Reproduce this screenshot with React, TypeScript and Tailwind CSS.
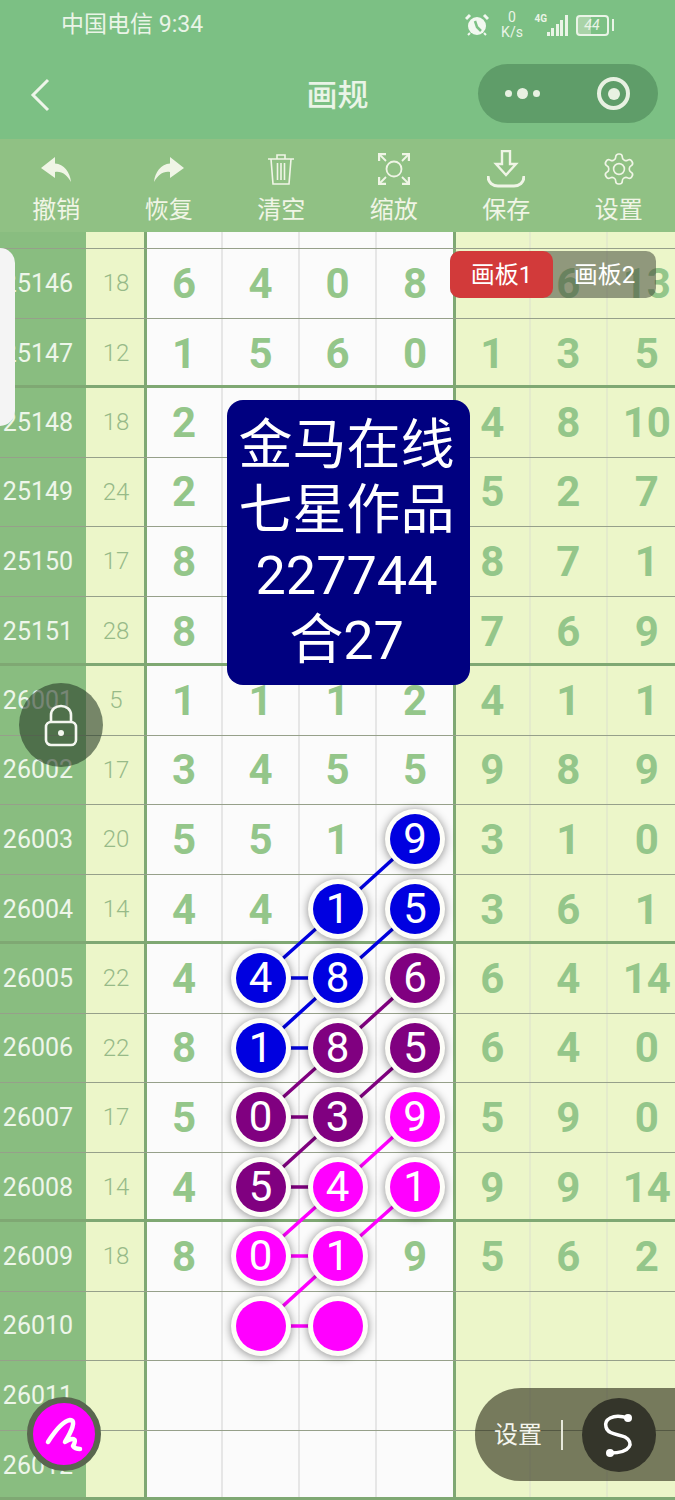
type Ball = { n: string; c: "blue" | "purple" | "pink" };
type Cell = string | Ball;

const b = (n: string): Ball => ({ n, c: "blue" });
const p = (n: string): Ball => ({ n, c: "purple" });
const m = (n: string): Ball => ({ n, c: "pink" });

const rows: { id: string; sum: string; cells: Cell[]; thick?: boolean }[] = [
  { id: "", sum: "", cells: ["", "", "", "", "", "", ""] },
  { id: "25146", sum: "18", cells: ["6", "4", "0", "8", "", "6", "13"] },
  { id: "25147", sum: "12", cells: ["1", "5", "6", "0", "1", "3", "5"], thick: true },
  { id: "25148", sum: "18", cells: ["2", "", "", "", "4", "8", "10"] },
  { id: "25149", sum: "24", cells: ["2", "", "", "", "5", "2", "7"] },
  { id: "25150", sum: "17", cells: ["8", "", "", "", "8", "7", "1"] },
  { id: "25151", sum: "28", cells: ["8", "", "", "", "7", "6", "9"], thick: true },
  { id: "26001", sum: "5", cells: ["1", "1", "1", "2", "4", "1", "1"] },
  { id: "26002", sum: "17", cells: ["3", "4", "5", "5", "9", "8", "9"] },
  { id: "26003", sum: "20", cells: ["5", "5", "1", b("9"), "3", "1", "0"] },
  { id: "26004", sum: "14", cells: ["4", "4", b("1"), b("5"), "3", "6", "1"], thick: true },
  { id: "26005", sum: "22", cells: ["4", b("4"), b("8"), p("6"), "6", "4", "14"] },
  { id: "26006", sum: "22", cells: ["8", b("1"), p("8"), p("5"), "6", "4", "0"] },
  { id: "26007", sum: "17", cells: ["5", p("0"), p("3"), m("9"), "5", "9", "0"] },
  { id: "26008", sum: "14", cells: ["4", p("5"), m("4"), m("1"), "9", "9", "14"], thick: true },
  { id: "26009", sum: "18", cells: ["8", m("0"), m("1"), "9", "5", "6", "2"] },
  { id: "26010", sum: "", cells: ["", m(""), m(""), "", "", "", ""] },
  { id: "26011", sum: "", cells: ["", "", "", "", "", "", ""] },
  { id: "26012", sum: "", cells: ["", "", "", "", "", "", ""], thick: true },
];

const links: [number, number, number, number, string][] = [
  [415, 839, 338, 909, "#0000e0"],
  [338, 909, 261, 978, "#0000e0"],
  [415, 909, 338, 978, "#0000e0"],
  [261, 978, 338, 978, "#0000e0"],
  [338, 978, 261, 1048, "#0000e0"],
  [261, 1048, 338, 1048, "#0000e0"],
  [415, 978, 338, 1048, "#800080"],
  [338, 1048, 261, 1117, "#800080"],
  [415, 1048, 338, 1117, "#800080"],
  [261, 1117, 338, 1117, "#800080"],
  [338, 1117, 261, 1187, "#800080"],
  [261, 1187, 338, 1187, "#800080"],
  [415, 1117, 338, 1187, "#ff00ff"],
  [338, 1187, 261, 1256, "#ff00ff"],
  [415, 1187, 338, 1256, "#ff00ff"],
  [261, 1256, 338, 1256, "#ff00ff"],
  [338, 1256, 261, 1326, "#ff00ff"],
  [261, 1326, 338, 1326, "#ff00ff"],
];

const ballColors = {
  blue: "bg-[#0000e0]",
  purple: "bg-[#800080]",
  pink: "bg-[#ff00ff]",
};

function BallView({ ball }: { ball: Ball }) {
  return (
    <div className="relative z-20 flex h-[60px] w-[60px] shrink-0 items-center justify-center rounded-full bg-[#fdfdf8] shadow-[0_1px_10px_rgba(0,0,0,0.45)]">
      <div
        className={`flex h-[50px] w-[50px] items-center justify-center rounded-full text-[42px] font-normal leading-none text-white ${ballColors[ball.c]}`}
      >
        {ball.n}
      </div>
    </div>
  );
}

function Row({ row, first }: { row: (typeof rows)[number]; first: boolean }) {
  const line = row.thick
    ? "border-b-[3px] border-[#7fa873]"
    : "border-b-[1.5px] border-[#96a08a]";
  const pad = row.thick ? "pt-[3px]" : "";
  return (
    <div
      className={`grid grid-cols-[86px_61px_76px_77px_77px_76px_77.5px_77.5px_77.5px] ${
        first ? "h-[17px]" : "h-[69.5px]"
      } ${line}`}
    >
      <div className={`flex items-center justify-center bg-[#89bd80] pr-[10px] text-[25px] text-[#eef6ea] ${pad}`}>
        {row.id}
      </div>
      <div className={`flex items-center justify-center border-r-[3px] border-[#7fa873] bg-[#ecf6c9] pl-[2px] text-[24px] font-light text-[#97ba88] ${pad}`}>
        {row.sum}
      </div>
      {row.cells.map((cell, i) => (
        <div
          key={i}
          className={`flex items-center justify-center text-[42px] font-bold text-[#94c68a] ${pad} ${
            i < 4 ? "bg-[#fbfbfb]" : "bg-[#ecf6c9]"
          } ${i === 3 ? "" : i === 6 ? "" : "border-r-2"} ${
            i < 3 ? "border-[#e6e6e6]" : "border-[#e4ebcb]"
          } ${i === 4 ? "border-l-[3px] border-l-[#7fa873]" : ""}`}
        >
          {typeof cell === "string" ? cell : <BallView ball={cell} />}
        </div>
      ))}
    </div>
  );
}

function ToolItem({ label, children }: { label: string; children: React.ReactNode }) {
  return (
    <div className="flex w-[112.5px] flex-col items-center">
      <div className="flex h-[50px] items-center justify-center">{children}</div>
      <div className="text-[24px] leading-[32px] text-[#f0f5e6]">{label}</div>
    </div>
  );
}

export default function App() {
  return (
    <div className="relative h-[1500px] w-[675px] overflow-hidden bg-[#ecf6c9] font-['Roboto','Noto_Sans_CJK_SC',sans-serif]">
      {/* status bar + title */}
      <div className="h-[139px] bg-[#7cc084] text-[#eaf4e7]">
        <div className="flex h-[50px] items-center justify-between pl-[61px] pr-[61px]">
          <div className="text-[23px]">中国电信 9:34</div>
          <div className="flex items-center">
            <svg width="24" height="24" viewBox="0 0 24 24" className="mr-[11px]">
              <circle cx="12" cy="13" r="9" fill="#f2f8f0" />
              <path d="M1 6 L5 2 M23 6 L19 2" stroke="#f2f8f0" strokeWidth="3" />
              <path d="M3 22 L5 20 M21 22 L19 20" stroke="#f2f8f0" strokeWidth="2" />
              <path d="M10 8 L12 14 L16 18" stroke="#7cc084" strokeWidth="2.5" fill="none" />
            </svg>
            <div className="mr-[10px] flex w-[25px] flex-col items-center text-[14px] leading-[15px]">
              <span>0</span>
              <span>K/s</span>
            </div>
            <div className="relative mr-[8px] flex h-[22px] w-[33px] items-end justify-end gap-[1.5px]">
              <span className="absolute left-0 top-0 text-[10px] font-bold leading-[10px]">4G</span>
              <i className="h-[4px] w-[3px] bg-[#eaf4e7]" />
              <i className="h-[8px] w-[3px] bg-[#eaf4e7]" />
              <i className="h-[12px] w-[3px] bg-[#eaf4e7]" />
              <i className="h-[16px] w-[3px] bg-[#eaf4e7]" />
              <i className="h-[21px] w-[3px] bg-[#eaf4e7]" />
            </div>
            <div className="flex h-[21px] w-[33px] items-center justify-center rounded-[4px] border-2 border-[#eaf4e7] bg-[linear-gradient(90deg,#a9d3a8_45%,transparent_45%)] text-[14px] italic leading-none">
              44
            </div>
            <div className="ml-[3px] h-[12px] w-[2.5px] bg-[#eaf4e7]" />
          </div>
        </div>
        <div className="grid h-[89px] grid-cols-3 items-start">
          <div className="pl-[30px] pt-[28px]">
            <svg width="20" height="34" viewBox="0 0 20 34" fill="none">
              <path d="M18 2 L3 17 L18 32" stroke="#eef5ea" strokeWidth="3" />
            </svg>
          </div>
          <div className="pt-[25px] text-center text-[31px] font-medium leading-[42px]">画规</div>
          <div className="flex justify-end pr-[17px] pt-[14px]">
            <div className="flex h-[59px] w-[180px] items-center rounded-full bg-[#5f9d69] pl-[27px]">
              <div className="flex items-center gap-[5px]">
                <i className="h-[7px] w-[7px] rounded-full bg-[#e8f1e2]" />
                <i className="h-[11px] w-[11px] rounded-full bg-[#e8f1e2]" />
                <i className="h-[7px] w-[7px] rounded-full bg-[#e8f1e2]" />
              </div>
              <div className="ml-[57px] flex h-[33px] w-[33px] items-center justify-center rounded-full border-[4px] border-[#e8f1e2]">
                <i className="h-[12px] w-[12px] rounded-full bg-[#e8f1e2]" />
              </div>
            </div>
          </div>
        </div>
      </div>

      {/* toolbar */}
      <div className="flex h-[93px] items-start bg-[#90c184] pt-[5px]">
        <ToolItem label="撤销">
          <svg width="30" height="25" viewBox="0 0 30 25" fill="#f0f5e6">
            <path d="M14 0 L0 11 L14 21 V15 C21 14 26 18 30 25 C29 15 23 7 14 6.5 Z" />
          </svg>
        </ToolItem>
        <ToolItem label="恢复">
          <svg width="30" height="25" viewBox="0 0 30 25" fill="#f0f5e6">
            <path d="M16 0 L30 11 L16 21 V15 C9 14 4 18 0 25 C1 15 7 7 16 6.5 Z" />
          </svg>
        </ToolItem>
        <ToolItem label="清空">
          <svg width="28" height="33" viewBox="0 0 28 33" fill="none" stroke="#f0f5e6" strokeWidth="1.6">
            <path d="M1 6 H27 M10 6 V2 H18 V6" />
            <path d="M4 6 L6 31 H22 L24 6" />
            <path d="M10.5 10 V27 M14 10 V27 M17.5 10 V27" />
          </svg>
        </ToolItem>
        <ToolItem label="缩放">
          <svg width="32" height="32" viewBox="0 0 32 32" fill="none" stroke="#f0f5e6" strokeWidth="1.8">
            <circle cx="16" cy="16" r="7.5" />
            <path d="M1 1 L8 8 M31 1 L24 8 M1 31 L8 24 M31 31 L24 24" />
            <path d="M1 8 V1 H8 M24 1 H31 V8 M1 24 V31 H8 M24 31 H31 V24" strokeWidth="2.4" />
          </svg>
        </ToolItem>
        <ToolItem label="保存">
          <svg width="38" height="38" viewBox="0 0 38 38" fill="none" stroke="#f0f5e6" strokeWidth="2.4">
            <path d="M15 1 H23 V14 H29 L19 25 L9 14 H15 Z" />
            <path d="M1 26 C1 33 6 36 11 36 H27 C32 36 37 33 37 26" strokeWidth="3" />
          </svg>
        </ToolItem>
        <ToolItem label="设置">
          <svg width="36" height="36" viewBox="0 0 24 24" fill="none" stroke="#f0f5e6" strokeWidth="1.1">
            <path d="M12.22 2h-.44a2 2 0 0 0-2 2v.18a2 2 0 0 1-1 1.73l-.43.25a2 2 0 0 1-2 0l-.15-.08a2 2 0 0 0-2.73.73l-.22.38a2 2 0 0 0 .73 2.73l.15.1a2 2 0 0 1 1 1.72v.51a2 2 0 0 1-1 1.74l-.15.09a2 2 0 0 0-.73 2.73l.22.38a2 2 0 0 0 2.73.73l.15-.08a2 2 0 0 1 2 0l.43.25a2 2 0 0 1 1 1.73V20a2 2 0 0 0 2 2h.44a2 2 0 0 0 2-2v-.18a2 2 0 0 1 1-1.73l.43-.25a2 2 0 0 1 2 0l.15.08a2 2 0 0 0 2.73-.73l.22-.39a2 2 0 0 0-.73-2.73l-.15-.08a2 2 0 0 1-1-1.74v-.5a2 2 0 0 1 1-1.74l.15-.09a2 2 0 0 0 .73-2.73l-.22-.38a2 2 0 0 0-2.73-.73l-.15.08a2 2 0 0 1-2 0l-.43-.25a2 2 0 0 1-1-1.73V4a2 2 0 0 0-2-2z" />
            <circle cx="12" cy="12" r="3.6" />
          </svg>
        </ToolItem>
      </div>

      {/* number table */}
      <div>
        {rows.map((row, i) => (
          <Row key={i} row={row} first={i === 0} />
        ))}
      </div>

      {/* connecting lines between the picked balls */}
      <svg className="pointer-events-none absolute left-0 top-0 z-10" width="675" height="1500" viewBox="0 0 675 1500">
        {links.map(([x1, y1, x2, y2, color], i) => (
          <line key={i} x1={x1} y1={y1} x2={x2} y2={y2} stroke={color} strokeWidth="3.5" />
        ))}
      </svg>

      {/* floating bits */}
      <div className="absolute left-0 top-[248px] z-30 h-[178px] w-[15px] rounded-r-[16px] bg-[#f4f4f4]" />

      <div className="absolute left-[450px] top-[251px] z-30 flex h-[47px] w-[206px] rounded-[10px] bg-[rgba(70,75,60,0.55)] text-[24px] text-white">
        <div className="flex w-[103px] items-center justify-center rounded-[10px] bg-[#d23a3a]">画板1</div>
        <div className="flex flex-1 items-center justify-center">画板2</div>
      </div>

      <div className="absolute left-[227px] top-[400px] z-30 flex h-[285px] w-[243px] flex-col items-center justify-center rounded-[16px] bg-[#000080] pr-[4px] text-[54px] leading-[65px] text-white">
        <div>金马在线</div>
        <div>七星作品</div>
        <div>227744</div>
        <div>合27</div>
      </div>

      <div className="absolute left-[19px] top-[683px] z-30 flex h-[84px] w-[84px] items-center justify-center rounded-full bg-[rgba(40,60,40,0.6)]">
        <svg width="34" height="43" viewBox="0 0 34 43" fill="none" stroke="#f4f7f0" strokeWidth="2.6">
          <path d="M7 18 V11 C7 -1 27 -1 27 11 V18" />
          <rect x="2" y="18" width="30" height="23" rx="5" />
          <circle cx="17" cy="29" r="3" fill="#f4f7f0" stroke="none" />
        </svg>
      </div>

      <div className="absolute left-[27px] top-[1397px] z-30 flex h-[74px] w-[74px] items-center justify-center rounded-full border-[6px] border-[#59664f] bg-[#ff00ff]">
        <svg width="62" height="62" viewBox="6 6 62 62" fill="none" stroke="#fff" strokeWidth="4.5" strokeLinecap="round" strokeLinejoin="round">
          <path d="M21 45 C28 34 36 24 43 23 C50 23 44 35 38 45 C45 40 51 41 46 49 C48 52 51 52 53 52" />
        </svg>
      </div>

      <div className="absolute left-[475px] top-[1388px] z-30 flex h-[93px] w-[220px] items-center rounded-l-[46px] bg-[rgba(40,40,20,0.6)] pl-[19px] text-[24px] text-[#f4f5ee]">
        <span>设置</span>
        <i className="ml-[19px] h-[30px] w-[2px] bg-[#e6e8da]" />
        <div className="ml-[19px] flex h-[74px] w-[74px] items-center justify-center rounded-full bg-[#34352a]">
          <svg width="74" height="74" viewBox="0 0 74 74" fill="none" stroke="#fff" strokeWidth="3.5">
            <path d="M46 20 C30 15 22 22 24 29 C26 37 37 36 43 39 C52 44 50 55 28 55" />
            <circle cx="46" cy="20" r="4" fill="#fff" stroke="none" />
            <circle cx="28" cy="55" r="4" fill="#fff" stroke="none" />
          </svg>
        </div>
      </div>
    </div>
  );
}
